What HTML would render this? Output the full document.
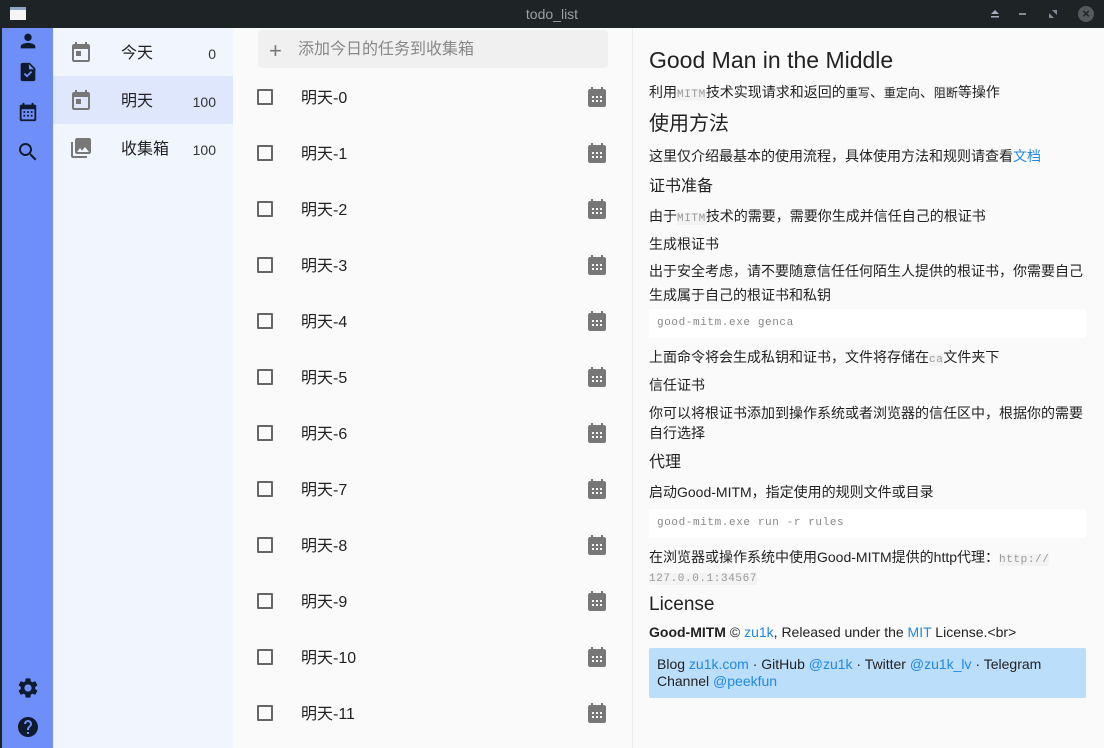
<!DOCTYPE html>
<html><head><meta charset="utf-8"><style>
*{margin:0;padding:0;box-sizing:border-box}
body{width:1104px;height:748px;overflow:hidden;background:#fafafa;font-family:"Liberation Sans","Noto Sans CJK SC",sans-serif;position:relative;color:#222}
.a{position:absolute;white-space:nowrap}
#tb{left:0;top:0;width:1104px;height:28px;background:#1e2426}
#side{left:2px;top:28px;width:51px;height:720px;background:#6e8ef8}
#lb{left:0;top:28px;width:2px;height:720px;background:#222}
#nav{left:53px;top:28px;width:180px;height:720px;background:#f1f5fe}
.nr{position:absolute;left:0;width:180px;height:48px}
.nr .t{position:absolute;left:68px;top:2px;line-height:48px;font-size:16px;color:#222}
.nr .c{position:absolute;right:17px;top:2px;line-height:48px;font-size:14px;color:#333}
.nr svg{position:absolute;left:16px;top:12px}
.row{position:absolute;left:233px;width:399px;height:56px}
.row .cb{position:absolute;left:24px;top:20px;width:16px;height:16px;border:2px solid #666;border-radius:1px}
.row .t{position:absolute;left:68px;top:2px;line-height:56px;font-size:16px;color:#222}
.row svg{position:absolute;left:352px;top:16px}
.p{font-size:14px;color:#222}
.m{font-family:"Liberation Mono",monospace;font-size:11px;color:#999;background:#f3f3f3;letter-spacing:0.6px}
.code{position:absolute;left:649px;width:437px;height:29px;background:#fff;font-family:"Liberation Mono",monospace;font-size:11px;color:#888;line-height:29px;padding-left:8px;letter-spacing:0.6px}
a{color:#1e88e5;text-decoration:none}
</style></head><body>
<div class="a" id="tb"></div>
<div class="a" style="left:10px;top:7px;width:16px;height:13px;background:#f4f4f4;border-top:3px solid #8fa6c8"></div>
<div class="a" style="left:0;top:0;width:1104px;line-height:28px;text-align:center;font-size:14px;color:#9aa0a2">todo_list</div>
<svg class="a" style="left:990px;top:9px" width="10" height="9"><path d="M1 5L5 1L9 5Z M1 7H9V8.5H1Z" fill="#aab"/></svg>
<div class="a" style="left:1019px;top:13px;width:7px;height:2px;background:#889"></div>
<svg class="a" style="left:1049px;top:10px" width="8" height="8"><path d="M0 8L0 3L5 8Z M8 0L8 5L3 0Z" fill="#889"/></svg>
<div class="a" style="left:1078px;top:6px;width:16px;height:16px;border-radius:50%;background:#555a5c;color:#1e2426;font-size:13px;line-height:16px;text-align:center;font-weight:bold">×</div>
<div class="a" id="lb"></div>
<div class="a" id="side"></div>
<svg class="a" style="left:17px;top:30px" width="22" height="22" viewBox="0 0 24 24" fill="#0f1a2e"><path d="M12 12c2.2 0 4-1.8 4-4s-1.8-4-4-4-4 1.8-4 4 1.8 4 4 4zm0 2c-2.7 0-8 1.3-8 4v2h16v-2c0-2.7-5.3-4-8-4z"/></svg>
<svg class="a" style="left:17px;top:60px" width="22" height="24" viewBox="0 0 24 24" fill="#0f1a2e"><path d="M14 2H6c-1.1 0-2 .9-2 2v16c0 1.1.9 2 2 2h12c1.1 0 2-.9 2-2V8l-6-6zm-3.06 16L7.4 14.46l1.41-1.41 2.12 2.12 4.240-4.24 1.41 1.41L10.94 18zM13 9V3.5L18.5 9H13z"/></svg>
<svg class="a" style="left:17px;top:101px" width="22" height="22" viewBox="0 0 24 24" fill="#0f1a2e"><path d="M19 4h-1V2h-2v2H8V2H6v2H5c-1.1 0-2 .9-2 2v14c0 1.1.9 2 2 2h14c1.1 0 2-.9 2-2V6c0-1.1-.9-2-2-2zm0 16H5V9h14v11zM7 11h2v2H7zm4 0h2v2h-2zm4 0h2v2h-2zM7 15h2v2H7zm4 0h2v2h-2zm4 0h2v2h-2z"/></svg>
<svg class="a" style="left:16px;top:140px" width="24" height="24" viewBox="0 0 24 24" fill="#0f1a2e"><path d="M15.5 14h-.79l-.28-.27C15.410 12.59 16 11.11 16 9.5 16 5.91 13.09 3 9.5 3S3 5.91 3 9.5 5.91 16 9.5 16c1.61 0 3.09-.59 4.23-1.57l.27.28v.79l5 4.99L20.49 19l-4.99-5zm-6 0C7.01 14 5 11.99 5 9.5S7.01 5 9.5 5 14 7.01 14 9.5 11.99 14 9.5 14z"/></svg>
<svg class="a" style="left:16px;top:676px" width="24" height="24" viewBox="0 0 24 24" fill="#0f1a2e"><path d="M19.14 12.94c.04-.3.06-.61.06-.94 0-.32-.02-.64-.07-.94l2.03-1.58a.49.49 0 00.12-.61l-1.92-3.32a.49.49 0 00-.59-.22l-2.39.96c-.5-.38-1.03-.7-1.62-.94l-.36-2.54a.484.484 0 00-.48-.41h-3.84c-.24 0-.43.17-.47.41l-.36 2.54c-.59.24-1.13.57-1.62.94l-2.39-.96c-.22-.08-.47 0-.59.22L2.74 8.87c-.12.21-.08.47.12.61l2.03 1.58c-.05.3-.09.63-.09.94s.02.64.07.94l-2.03 1.58a.49.49 0 00-.12.61l1.92 3.32c.12.22.37.29.59.22l2.39-.96c.5.38 1.03.7 1.62.94l.36 2.54c.05.24.24.41.48.41h3.84c.24 0 .44-.17.47-.41l.36-2.54c.59-.24 1.13-.56 1.62-.94l2.39.96c.22.08.47 0 .59-.22l1.92-3.32c.12-.22.07-.47-.12-.61l-2.01-1.58zM12 15.6c-1.98 0-3.6-1.62-3.6-3.6s1.62-3.6 3.6-3.6 3.6 1.62 3.6 3.6-1.62 3.6-3.6 3.6z"/></svg>
<svg class="a" style="left:16px;top:715px" width="24" height="24" viewBox="0 0 24 24" fill="#0f1a2e"><path d="M12 2C6.48 2 2 6.48 2 12s4.48 10 10 10 10-4.48 10-10S17.52 2 12 2zm1 17h-2v-2h2v2zm2.07-7.75l-.9.92C13.45 12.9 13 13.5 13 15h-2v-.5c0-1.1.45-2.1 1.17-2.83l1.24-1.26c.37-.36.59-.86.59-1.41 0-1.1-.9-2-2-2s-2 .9-2 2H8c0-2.21 1.79-4 4-4s4 1.79 4 4c0 .88-.36 1.68-.93 2.25z"/></svg>

<div class="a" id="nav">
<div class="nr" style="top:0"><svg width="24" height="24" viewBox="0 0 24 24" fill="#777"><path d="M19 4h-1V2h-2v2H8V2H6v2H5c-1.1 0-2 .9-2 2v14c0 1.1.9 2 2 2h14c1.1 0 2-.9 2-2V6c0-1.1-.9-2-2-2zm0 16H5V9h14v11zM7 11h5v5H7z"/></svg><span class="t">今天</span><span class="c">0</span></div>
<div class="nr" style="top:48px;background:#dfe7fc"><svg width="24" height="24" viewBox="0 0 24 24" fill="#777"><path d="M19 4h-1V2h-2v2H8V2H6v2H5c-1.1 0-2 .9-2 2v14c0 1.1.9 2 2 2h14c1.1 0 2-.9 2-2V6c0-1.1-.9-2-2-2zm0 16H5V9h14v11zM7 11h5v5H7z"/></svg><span class="t">明天</span><span class="c">100</span></div>
<div class="nr" style="top:96px"><svg width="24" height="24" viewBox="0 0 24 24" fill="#777"><path d="M22 16V4c0-1.1-.9-2-2-2H8c-1.1 0-2 .9-2 2v12c0 1.1.9 2 2 2h12c1.1 0 2-.9 2-2zm-11-4l2.03 2.71L16 11l4 5H8l3-4zM2 6v14c0 1.1.9 2 2 2h14v-2H4V6H2z"/></svg><span class="t">收集箱</span><span class="c">100</span></div>
</div>

<div class="a" style="left:632px;top:28px;width:1px;height:720px;background:#ececec"></div>
<div class="a" style="left:258px;top:30px;width:350px;height:38px;background:#f0f0f0;border-radius:4px"></div>
<div class="a" style="left:269px;top:41px;font-size:22px;line-height:20px;color:#777;font-weight:300">+</div>
<div class="a" style="left:298px;top:31px;line-height:38px;font-size:16px;color:#888">添加今日的任务到收集箱</div>

<div id="rows"></div>
<script>
var h='',ic='<svg width="24" height="24" viewBox="0 0 24 24" fill="#777"><path d="M19 4h-1V2h-2v2H8V2H6v2H5c-1.1 0-2 .9-2 2v14c0 1.1.9 2 2 2h14c1.1 0 2-.9 2-2V6c0-1.1-.9-2-2-2zM7 11h2v2H7zm4 0h2v2h-2zm4 0h2v2h-2zM7 15h2v2H7zm4 0h2v2h-2zm4 0h2v2h-2z"/></svg>';
for(var i=0;i<12;i++)h+='<div class="row" style="top:'+(69+i*56)+'px"><div class="cb"></div><span class="t">明天-'+i+'</span>'+ic+'</div>';
document.getElementById('rows').innerHTML=h;
</script>

<div class="a" style="left:649px;top:45px;font-size:23px;line-height:30px;color:#222">Good Man in the Middle</div>
<div class="a p" style="left:649px;top:82px;line-height:20px">利用<span class="m">MITM</span>技术实现请求和返回的<span style="font-size:12px;background:#f3f3f3">重写</span>、<span style="font-size:12px;background:#f3f3f3">重定向</span>、<span style="font-size:12px;background:#f3f3f3">阻断</span>等操作</div>
<div class="a" style="left:649px;top:110px;font-size:20px;line-height:28px">使用方法</div>
<div class="a p" style="left:649px;top:146px;line-height:20px">这里仅介绍最基本的使用流程，具体使用方法和规则请查看<a>文档</a></div>
<div class="a" style="left:649px;top:176px;font-size:16px;line-height:22px">证书准备</div>
<div class="a p" style="left:649px;top:206px;line-height:20px">由于<span class="m">MITM</span>技术的需要，需要你生成并信任自己的根证书</div>
<div class="a p" style="left:649px;top:234px;line-height:20px">生成根证书</div>
<div class="a p" style="left:649px;top:259px;line-height:24px;white-space:normal;width:440px">出于安全考虑，请不要随意信任任何陌生人提供的根证书，你需要自己生成属于自己的根证书和私钥</div>
<div class="code" style="top:309px">good-mitm.exe genca</div>
<div class="a p" style="left:649px;top:347px;line-height:20px">上面命令将会生成私钥和证书，文件将存储在<span class="m">ca</span>文件夹下</div>
<div class="a p" style="left:649px;top:375px;line-height:20px">信任证书</div>
<div class="a p" style="left:649px;top:403px;line-height:20px">你可以将根证书添加到操作系统或者浏览器的信任区中，根据你的需要</div>
<div class="a p" style="left:649px;top:423px;line-height:20px">自行选择</div>
<div class="a" style="left:649px;top:452px;font-size:16px;line-height:22px">代理</div>
<div class="a p" style="left:649px;top:482px;line-height:20px">启动Good-MITM，指定使用的规则文件或目录</div>
<div class="code" style="top:509px">good-mitm.exe run -r rules</div>
<div class="a p" style="left:649px;top:547px;line-height:20px">在浏览器或操作系统中使用Good-MITM提供的http代理：<span class="m">http://</span></div>
<div class="a" style="left:649px;top:569px;line-height:16px"><span class="m">127.0.0.1:34567</span></div>
<div class="a" style="left:649px;top:592px;font-size:19px;line-height:26px">License</div>
<div class="a p" style="left:649px;top:622px;line-height:20px"><b>Good-MITM</b> © <a>zu1k</a>, Released under the <a>MIT</a> License.&lt;br&gt;</div>
<div class="a" style="left:649px;top:648px;width:437px;height:50px;background:#bbdefb;border-radius:2px"></div>
<div class="a p" style="left:657px;top:656px;line-height:17px">Blog <a>zu1k.com</a> · GitHub <a>@zu1k</a> · Twitter <a>@zu1k_lv</a> · Telegram</div>
<div class="a p" style="left:657px;top:673px;line-height:17px">Channel <a>@peekfun</a></div>
</body></html>
